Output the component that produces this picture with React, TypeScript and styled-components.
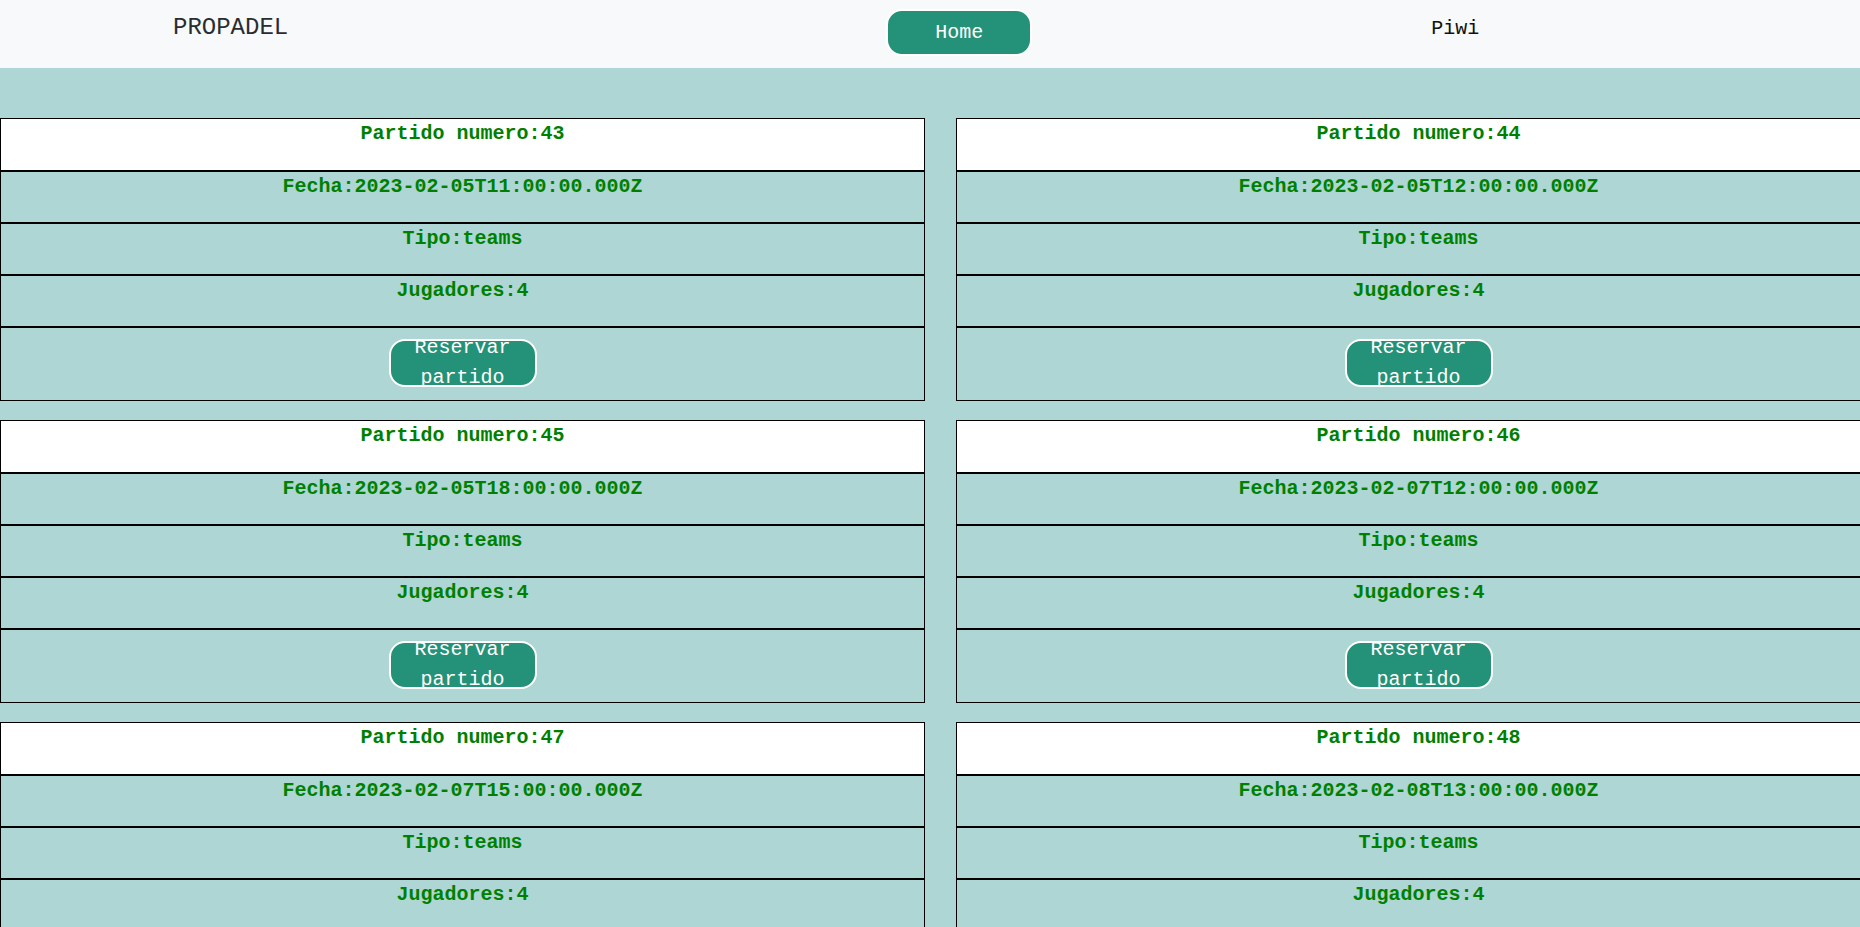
import React from "react";
import styled, { createGlobalStyle } from "styled-components";

const GlobalStyle = createGlobalStyle`
  html, body {
    margin: 0;
    padding: 0;
  }
  body {
    background: #aed6d4;
    font-family: "Liberation Mono", "Courier New", monospace;
    overflow-x: hidden;
  }
`;

const NavBar = styled.header`
  display: flex;
  align-items: flex-start;
  height: 68px;
  background: #f8f9fa;
  padding-left: 173px;
  box-sizing: border-box;
`;

const Brand = styled.a`
  font-size: 24px;
  line-height: 36px;
  margin-top: 10px;
  color: #2a2d30;
  text-decoration: none;
  white-space: nowrap;
`;

const HomeButton = styled.button`
  margin-top: 9px;
  margin-left: 598px;
  width: 146px;
  height: 47px;
  box-sizing: border-box;
  border: 2px solid #ffffff;
  border-radius: 16px;
  background: #249278;
  color: #ffffff;
  font-family: "Liberation Mono", "Courier New", monospace;
  font-size: 20px;
  line-height: 30px;
  padding: 0;
  cursor: pointer;
`;

const UserName = styled.span`
  margin-top: 14px;
  margin-left: 399px;
  font-size: 20px;
  line-height: 30px;
  color: #111;
  white-space: nowrap;
`;

const Main = styled.main`
  padding-top: 50px;
  display: grid;
  grid-template-columns: 925px 925px;
  column-gap: 31px;
  row-gap: 19px;
`;

const Card = styled.div`
  border: 1px solid #000;
  display: flex;
  flex-direction: column;
`;

const Row = styled.div<{ $white?: boolean; $height: number }>`
  height: ${(p) => p.$height}px;
  background: ${(p) => (p.$white ? "#ffffff" : "transparent")};
  border-bottom: 2px solid #000;
  text-align: center;
  color: #008000;
  font-weight: bold;
  font-size: 20px;
  line-height: 30px;
  box-sizing: content-box;
`;

const ButtonRow = styled.div`
  height: 72px;
  box-sizing: border-box;
  padding-top: 11px;
  display: flex;
  justify-content: center;
  align-items: flex-start;
`;

const ReserveButton = styled.button`
  width: 148px;
  height: 48px;
  box-sizing: border-box;
  border: 2px solid #ffffff;
  border-radius: 16px;
  background: #249278;
  color: #ffffff;
  font-family: "Liberation Mono", "Courier New", monospace;
  font-size: 20px;
  line-height: 30px;
  padding: 0;
  display: flex;
  align-items: center;
  justify-content: center;
  overflow: visible;
  cursor: pointer;
`;

const ButtonLabel = styled.span`
  display: block;
  flex-shrink: 0;
  width: 100%;
  text-align: center;
`;

const matches = [
  { id: 43, fecha: "2023-02-05T11:00:00.000Z" },
  { id: 44, fecha: "2023-02-05T12:00:00.000Z" },
  { id: 45, fecha: "2023-02-05T18:00:00.000Z" },
  { id: 46, fecha: "2023-02-07T12:00:00.000Z" },
  { id: 47, fecha: "2023-02-07T15:00:00.000Z" },
  { id: 48, fecha: "2023-02-08T13:00:00.000Z" },
];

export default function App() {
  return (
    <>
      <GlobalStyle />
      <NavBar>
        <Brand href="#">PROPADEL</Brand>
        <HomeButton>Home</HomeButton>
        <UserName>Piwi</UserName>
      </NavBar>
      <Main>
        {matches.map((m) => (
          <Card key={m.id}>
            <Row $white $height={51}>Partido numero:{m.id}</Row>
            <Row $height={50}>Fecha:{m.fecha}</Row>
            <Row $height={50}>Tipo:teams</Row>
            <Row $height={50}>Jugadores:4</Row>
            <ButtonRow>
              <ReserveButton>
                <ButtonLabel>Reservar partido</ButtonLabel>
              </ReserveButton>
            </ButtonRow>
          </Card>
        ))}
      </Main>
    </>
  );
}
